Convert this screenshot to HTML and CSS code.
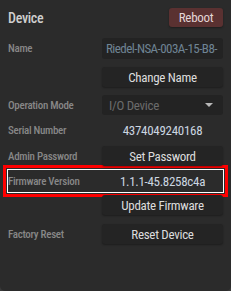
FILE: index.html
```html
<!DOCTYPE html>
<html>
<head>
  <title>Device</title>
  <link rel="stylesheet" href="styles.css">
</head>
<body>
  <div class="panel">
    <div class="panel-header">
      <span class="panel-title">Device</span>
      <button class="btn btn-danger" type="button">Reboot</button>
    </div>

    <div class="row row-name">
      <span class="label">Name</span>
      <div class="input">Riedel-NSA-003A-15-B8-</div>
    </div>
    <div class="row row-change">
      <span class="label"></span>
      <button class="btn" type="button">Change Name</button>
    </div>
    <div class="row row-mode">
      <span class="label">Operation Mode</span>
      <div class="select">
        <span>I/O Device</span>
        <span class="caret"></span>
      </div>
    </div>
    <div class="row row-serial">
      <span class="label">Serial Number</span>
      <span class="value">4374049240168</span>
    </div>
    <div class="row row-admin">
      <span class="label">Admin Password</span>
      <button class="btn" type="button">Set Password</button>
    </div>
    <div class="row row-firmware highlight">
      <span class="label">Firmware Version</span>
      <span class="value">1.1.1-45.8258c4a</span>
    </div>
    <div class="row row-update">
      <span class="label"></span>
      <button class="btn" type="button">Update Firmware</button>
    </div>
    <div class="row row-reset">
      <span class="label">Factory Reset</span>
      <button class="btn" type="button">Reset Device</button>
    </div>
  </div>
</body>
</html>
```

FILE: styles.css
```css
html, body {
  margin: 0;
  height: 100%;
}

body {
  background-color: #3a3a3a;
  font-family: 'Roboto Condensed', 'Roboto', sans-serif;
  letter-spacing: -0.3px;
}

.panel {
  height: 100%;
  box-sizing: border-box;
  background-color: #2b2b2b;
  border-radius: 0 0 5px 5px;
  padding: 8px 8px 0 8px;
}

.panel-header {
  display: flex;
  justify-content: space-between;
  align-items: center;
  height: 19px;
  margin-bottom: 11px;
}

.panel-title {
  font-size: 14px;
  font-weight: 500;
  color: #cfcfcf;
}

.row {
  display: grid;
  grid-template-columns: 94px 121px;
  align-items: center;
  height: 20px;
}

.label {
  font-size: 11px;
  font-weight: 500;
  color: #878787;
  white-space: nowrap;
}

.btn {
  height: 20px;
  border: none;
  border-radius: 3px;
  padding: 0;
  background-color: #242424;
  color: #dcdcdc;
  font-family: inherit;
  letter-spacing: -0.3px;
  font-size: 13px;
  font-weight: 400;
  box-shadow: 0 1px 2px rgba(0, 0, 0, 0.35);
}

.panel-header .btn {
  width: 54px;
  height: 19px;
}

.btn-danger {
  background-color: #5a3131;
  color: #e3d6d6;
}

.input {
  height: 21px;
  line-height: 21px;
  box-sizing: border-box;
  padding-left: 4px;
  border-radius: 3px;
  background-color: #232323;
  color: #6f8494;
  font-size: 13px;
  letter-spacing: -0.55px;
  overflow: hidden;
  white-space: nowrap;
}

.select {
  display: flex;
  justify-content: space-between;
  align-items: center;
  height: 20px;
  padding: 0 10px 0 7px;
  border-radius: 3px;
  background-color: #232323;
  color: #6b6b6b;
  font-size: 13px;
}

.caret {
  width: 0;
  height: 0;
  border-left: 4px solid transparent;
  border-right: 4px solid transparent;
  border-top: 4px solid #b8b8b8;
}

.value {
  text-align: center;
  font-size: 13px;
  font-weight: 400;
  color: #cbd6e0;
}

.row-name { height: 21px; margin-bottom: 8px; }
.row-change { margin-bottom: 8px; }
.row-mode { margin-bottom: 4px; }
.row-serial { height: 22px; margin-bottom: 5px; }
.row-admin { margin-bottom: 4px; }
.row-firmware { height: 22px; margin-bottom: 3px; }
.row-update { margin-bottom: 9px; }

/* annotation box round the firmware row */
.highlight {
  outline: 1px solid #ffffff;
  box-shadow: 0 0 0 2px #2b2b2b, 0 0 0 5px #ff0000;
}
```
